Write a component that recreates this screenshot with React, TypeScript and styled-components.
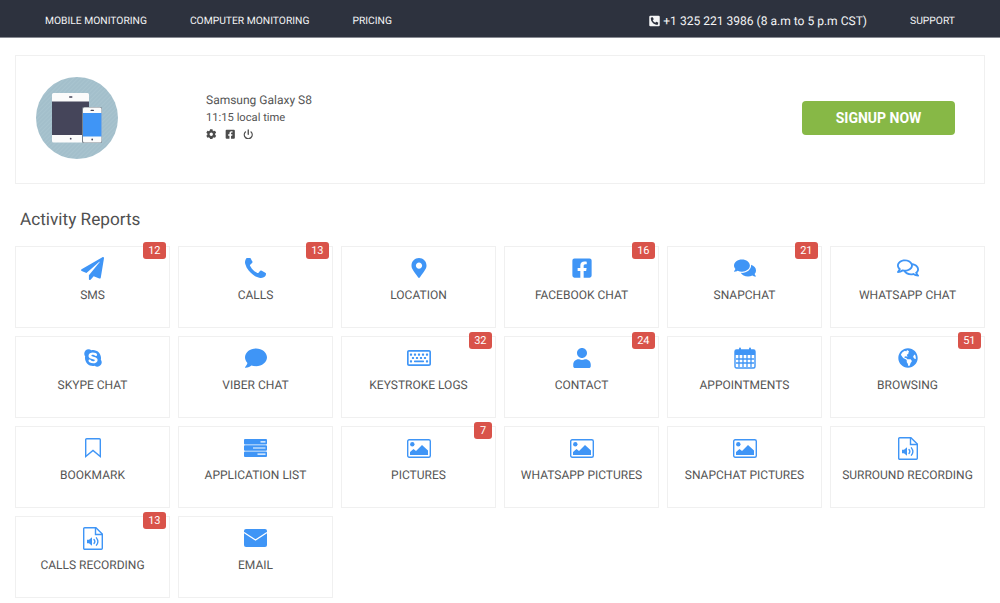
import React from "react";
import styled, { createGlobalStyle } from "styled-components";
import {
  FaPaperPlane,
  FaMapMarkerAlt,
  FaFacebookSquare,
  FaComments,
  FaRegComments,
  FaSkype,
  FaComment,
  FaRegKeyboard,
  FaUser,
  FaGlobeAmericas,
  FaCog,
  FaPhoneSquareAlt,
} from "react-icons/fa";
import { FiPower } from "react-icons/fi";

const GlobalStyle = createGlobalStyle`
  html, body {
    margin: 0;
    padding: 0;
    background: #fff;
    font-family: Roboto, "Liberation Sans", sans-serif;
    color: #555;
    text-rendering: geometricPrecision;
  }
  * {
    box-sizing: border-box;
  }
`;

const BLUE = "#3f95f6";

const PhoneIcon = () => (
  <svg width="21" height="21" viewBox="192 192 1408 1408" fill={BLUE}>
    <path d="M1600 1240q0 27-10 70.500t-21 68.500q-21 50-122 106-94 51-186 51-27 0-53-3.500t-57.500-12.500-47-14.500-55.500-20.500-49-18q-98-35-175-83-127-79-264-216t-216-264q-48-77-83-175-3-9-18-49t-20.500-55.500-14.500-47-12.500-57.500-3.500-53q0-92 51-186 56-101 106-122 25-11 68.500-21t70.500-10q14 0 21 3 18 6 53 76 11 19 30 54t35 63.500 31 53.500q3 4 17.500 25t21.500 35.500 7 28.500q0 20-28.500 50t-62 55-62 53-28.500 46q0 9 5 22.500t8.500 20.500 14 24 11.500 19q76 137 174 235t235 174q2 1 19 11.500t24 14 20.500 8.500 22.500 5q18 0 46-28.500t53-62 55-62 50-28.500q14 0 28.500 7t35.500 21.500 25 17.500q25 15 53.500 31t63.500 35 54 30q70 35 76 53 3 7 3 21z" />
  </svg>
);

const CalendarIcon = () => (
  <svg width="22" height="22" viewBox="0 0 22 22" fill="none">
    <rect x="1" y="3" width="20" height="18" rx="1.5" stroke={BLUE} strokeWidth="1.4" />
    <rect x="1" y="3" width="20" height="5" fill={BLUE} />
    <rect x="5" y="0.5" width="2" height="5" rx="1" fill={BLUE} />
    <rect x="15" y="0.5" width="2" height="5" rx="1" fill={BLUE} />
    <path
      d="M5 8v12M9 8v12M13 8v12M17 8v12M2 12h18M2 16h18"
      stroke={BLUE}
      strokeWidth="1.3"
    />
  </svg>
);

const BookmarkIcon = () => (
  <svg width="16" height="20" viewBox="0 0 16 20" fill="none">
    <path
      d="M1.700.7h12.600a1 1 0 0 1 1 1v16.800l-7.300-6-7.300 6V1.700a1 1 0 0 1 1-1z"
      stroke={BLUE}
      strokeWidth="1.400"
    />
  </svg>
);

const AppListIcon = () => (
  <svg width="23" height="18" viewBox="0 0 23 18">
    <path
      fillRule="evenodd"
      fill={BLUE}
      d="M1 0h21a1 1 0 0 1 1 1v3.600a1 1 0 0 1-1 1H1a1 1 0 0 1-1-1V1a1 1 0 0 1 1-1zm15.500 2.200v1.200h5V2.200zM1 6.200h21a1 1 0 0 1 1 1v3.600a1 1 0 0 1-1 1H1a1 1 0 0 1-1-1V7.200a1 1 0 0 1 1-1zm8 2.200v1.200h12.500V8.400zM1 12.400h21a1 1 0 0 1 1 1V17a1 1 0 0 1-1 1H1a1 1 0 0 1-1-1v-3.600a1 1 0 0 1 1-1zm12.500 2.200v1.200h8v-1.200z"
    />
  </svg>
);

const PictureIcon = () => (
  <svg width="24" height="19" viewBox="0 0 24 19" fill="none">
    <rect x="0.7" y="0.7" width="22.600" height="17.600" rx="1.500" stroke={BLUE} strokeWidth="1.400" />
    <circle cx="5.300" cy="5.200" r="2.200" fill={BLUE} />
    <path d="M3 16v-3l3.500-3 2.500 2 6-6 6 5.500V16z" fill={BLUE} />
  </svg>
);

const AudioFileIcon = () => (
  <svg width="20" height="23" viewBox="0 0 20 23" fill="none">
    <path
      d="M1.700.7h11.200l6.400 6.400v14.200a1 1 0 0 1-1 1H1.700a1 1 0 0 1-1-1V1.700a1 1 0 0 1 1-1z"
      stroke={BLUE}
      strokeWidth="1.400"
    />
    <path d="M12.500.7v6.800h6.800" stroke={BLUE} strokeWidth="1.400" />
    <path d="M4 12.800h2l3-2.600v8.600l-3-2.600H4z" fill={BLUE} />
    <path
      d="M11 12.500a3 3 0 0 1 0 4M13.400 10.800a6 6 0 0 1 0 7.400"
      stroke={BLUE}
      strokeWidth="1.300"
      strokeLinecap="round"
    />
  </svg>
);

const MailIcon = () => (
  <svg width="23" height="18" viewBox="0 0 23 18">
    <rect width="23" height="18" rx="2" fill={BLUE} />
    <path d="M0 3.500l11.500 7.500L23 3.500" fill="none" stroke="#fff" strokeWidth="1.300" />
  </svg>
);

const DeviceArt = () => (
  <svg width="82" height="82" viewBox="0 0 82 82">
    <defs>
      <pattern id="hatch" width="3" height="3" patternUnits="userSpaceOnUse" patternTransform="rotate(-45)">
        <rect width="3" height="3" fill="#a3bfcb" />
        <rect width="3" height="1" fill="#a9c4cf" />
      </pattern>
    </defs>
    <circle cx="41" cy="41" r="41" fill="url(#hatch)" />
    <rect x="16" y="16" width="37" height="49.500" rx="1.500" fill="#fbfbfb" />
    <rect x="16" y="24.500" width="37" height="33.500" fill="#45455a" />
    <rect x="33" y="19.300" width="3.500" height="1.500" rx="0.700" fill="#45455a" />
    <circle cx="34.700" cy="61.700" r="0.900" fill="#45455a" />
    <rect x="46" y="30" width="20" height="36" rx="1.500" fill="#77808a" />
    <rect x="47" y="30.500" width="18.500" height="35" rx="1.500" fill="#fbfbfb" />
    <rect x="47" y="36" width="18.500" height="23.500" fill={BLUE} />
    <rect x="54.500" y="32.700" width="3.500" height="1.400" rx="0.700" fill="#45455a" />
    <circle cx="56.200" cy="62.500" r="0.900" fill="#45455a" />
  </svg>
);

const TopBar = styled.header`
  display: flex;
  align-items: center;
  height: 38px;
  padding: 4px 45px 0;
  background: #2d323e;
  border-bottom: 1px solid #878a92;
  color: #f4f5f6;
`;

const NavLink = styled.a`
  font-size: 10.300px;
  line-height: 20px;
  margin-right: 43px;
`;

const PhoneLine = styled.div`
  display: flex;
  align-items: center;
  gap: 3px;
  margin-left: auto;
  margin-right: 43px;
  font-size: 12.050px;
  svg {
    width: 11px;
    height: 12px;
  }
`;

const SupportLink = styled(NavLink)`
  margin-right: 0;
`;

const Page = styled.main`
  padding: 17px 15px 0;
`;

const DevicePanel = styled.section`
  display: flex;
  align-items: center;
  height: 129px;
  padding: 0 29px 4px 20px;
  border: 1px solid #f0f0f0;
`;

const DeviceInfo = styled.div`
  margin-left: 88px;
  margin-bottom: 4px;
  font-size: 11.200px;
  line-height: 17px;
`;

const DeviceName = styled.div`
  font-size: 12px;
`;

const DeviceTools = styled.div`
  display: flex;
  align-items: center;
  gap: 8px;
  margin-top: 3px;
  color: #4c4c4c;
  font-size: 10.500px;
  svg {
    display: block;
  }
`;

const SignupButton = styled.button`
  margin-left: auto;
  width: 153px;
  height: 34px;
  border: none;
  border-radius: 4px;
  background: #87b846;
  color: #fff;
  font-family: inherit;
  font-size: 14px;
  font-weight: 700;
`;

const SectionTitle = styled.h2`
  margin: 25px 0 15px 5px;
  font-size: 17.200px;
  line-height: 22px;
  font-weight: 400;
  color: #505050;
`;

const ReportGrid = styled.div`
  display: grid;
  grid-template-columns: repeat(6, 155px);
  grid-auto-rows: 82px;
  gap: 8px;
`;

const ReportCard = styled.a`
  position: relative;
  display: flex;
  flex-direction: column;
  align-items: center;
  padding-top: 9px;
  border: 1px solid #f0f0f0;
  background: #fff;
`;

const IconSlot = styled.div<{ $size?: number }>`
  display: flex;
  align-items: center;
  justify-content: center;
  height: 24px;
  color: ${BLUE};
  font-size: ${(p) => p.$size ?? 22}px;
`;

const CardLabel = styled.div`
  margin-top: 7px;
  font-size: 12px;
  line-height: 16px;
  color: #555;
`;

const CountBadge = styled.span`
  position: absolute;
  top: -5px;
  right: 3px;
  min-width: 18px;
  height: 17px;
  padding: 0 5.500px;
  border-radius: 3px;
  background: #d9534a;
  color: #fff;
  font-size: 11px;
  line-height: 17px;
  text-align: center;
`;

const reports: { label: string; icon: React.ReactNode; size?: number; count?: number }[] = [
  { label: "SMS", icon: <FaPaperPlane />, size: 23, count: 12 },
  { label: "CALLS", icon: <PhoneIcon />, count: 13 },
  { label: "LOCATION", icon: <FaMapMarkerAlt />, size: 20 },
  { label: "FACEBOOK CHAT", icon: <FaFacebookSquare />, count: 16 },
  { label: "SNAPCHAT", icon: <FaComments />, count: 21 },
  { label: "WHATSAPP CHAT", icon: <FaRegComments /> },
  { label: "SKYPE CHAT", icon: <FaSkype />, size: 20 },
  { label: "VIBER CHAT", icon: <FaComment /> },
  { label: "KEYSTROKE LOGS", icon: <FaRegKeyboard />, size: 24, count: 32 },
  { label: "CONTACT", icon: <FaUser />, size: 20, count: 24 },
  { label: "APPOINTMENTS", icon: <CalendarIcon /> },
  { label: "BROWSING", icon: <FaGlobeAmericas />, size: 20, count: 51 },
  { label: "BOOKMARK", icon: <BookmarkIcon /> },
  { label: "APPLICATION LIST", icon: <AppListIcon /> },
  { label: "PICTURES", icon: <PictureIcon />, count: 7 },
  { label: "WHATSAPP PICTURES", icon: <PictureIcon /> },
  { label: "SNAPCHAT PICTURES", icon: <PictureIcon /> },
  { label: "SURROUND RECORDING", icon: <AudioFileIcon /> },
  { label: "CALLS RECORDING", icon: <AudioFileIcon />, count: 13 },
  { label: "EMAIL", icon: <MailIcon /> },
];

const App = () => (
  <>
    <GlobalStyle />
    <TopBar>
      <NavLink>MOBILE MONITORING</NavLink>
      <NavLink>COMPUTER MONITORING</NavLink>
      <NavLink>PRICING</NavLink>
      <PhoneLine>
        <FaPhoneSquareAlt />
        +1 325 221 3986 (8 a.m to 5 p.m CST)
      </PhoneLine>
      <SupportLink>SUPPORT</SupportLink>
    </TopBar>
    <Page>
      <DevicePanel>
        <DeviceArt />
        <DeviceInfo>
          <DeviceName>Samsung Galaxy S8</DeviceName>
          <div>11:15 local time</div>
          <DeviceTools>
            <FaCog />
            <FaFacebookSquare />
            <FiPower strokeWidth={3} />
          </DeviceTools>
        </DeviceInfo>
        <SignupButton>SIGNUP NOW</SignupButton>
      </DevicePanel>
      <SectionTitle>Activity Reports</SectionTitle>
      <ReportGrid>
        {reports.map((r) => (
          <ReportCard key={r.label}>
            <IconSlot $size={r.size}>{r.icon}</IconSlot>
            <CardLabel>{r.label}</CardLabel>
            {r.count !== undefined && <CountBadge>{r.count}</CountBadge>}
          </ReportCard>
        ))}
      </ReportGrid>
    </Page>
  </>
);

export default App;
